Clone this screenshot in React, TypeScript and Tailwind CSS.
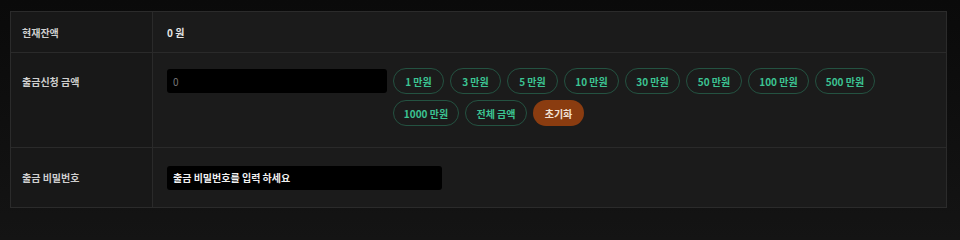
import React from "react";

const font = { fontFamily: '"Noto Sans CJK KR", "Noto Sans", sans-serif' };

const row1: [string, string][] = [
  ["1 만원", "w-[51px]"],
  ["3 만원", "w-[51px]"],
  ["5 만원", "w-[51px]"],
  ["10 만원", "w-[55px]"],
  ["30 만원", "w-[55px]"],
  ["50 만원", "w-[56px]"],
  ["100 만원", "w-[61px]"],
  ["500 만원", "w-[60px]"],
  ["1000 만원", "w-[66px]"],
  ["전체 금액", "w-[62px]"],
];

export default function App() {
  return (
    <div
      className="w-[960px] h-[222px] min-h-screen overflow-hidden bg-gradient-to-b from-[#0a0a0a] to-[#141414] pt-[11px] pl-[10px]"
      style={font}
    >
      <div className="w-[937px] border border-[#2b2b2b] bg-[#1b1b1b] grid grid-cols-[142px_1fr] text-[10px]">
        <div className="h-[41px] bg-[#181818] border-r border-b border-[#2a2a2a] flex items-center pl-[11px] font-semibold text-[#cfcfcf]">
          현재잔액
        </div>
        <div className="h-[41px] border-b border-[#2a2a2a] flex items-center pl-[14px] font-bold text-[#e6e6e6]">
          0 원
        </div>

        <div className="h-[95px] bg-[#181818] border-r border-b border-[#2a2a2a] pl-[11px] pt-[21px] font-semibold text-[#cfcfcf]">
          출금신청 금액
        </div>
        <div className="h-[95px] border-b border-[#2a2a2a] flex items-start pl-[14px] pt-[15px] gap-[6px]">
          <input
            className="w-[220px] h-[24px] mt-[1px] bg-black rounded-[3px] px-[6px] text-[10px] text-[#777] outline-none"
            defaultValue="0"
          />
          <div className="w-[500px] flex flex-wrap gap-[6px]">
            {row1.map(([t, w]) => (
              <button
                key={t}
                className={`${w} h-[26px] rounded-full border border-[#245241] text-[#3cc493] font-semibold text-[10px] flex items-center justify-center`}
              >
                {t}
              </button>
            ))}
            <button className="w-[51px] h-[26px] rounded-full bg-[#8a3c10] text-[#f1e1d4] font-semibold text-[10px] flex items-center justify-center">
              초기화
            </button>
          </div>
        </div>

        <div className="h-[59px] bg-[#181818] border-r border-[#2a2a2a] flex items-center pl-[11px] font-semibold text-[#cfcfcf]">
          출금 비밀번호
        </div>
        <div className="h-[59px] flex items-center pl-[14px]">
          <input
            type="password"
            className="w-[275px] h-[24px] bg-black rounded-[3px] px-[6px] text-[10px] text-white font-bold placeholder:text-[#f0f0f0] outline-none"
            placeholder="출금 비밀번호를 입력 하세요"
          />
        </div>
      </div>
    </div>
  );
}
